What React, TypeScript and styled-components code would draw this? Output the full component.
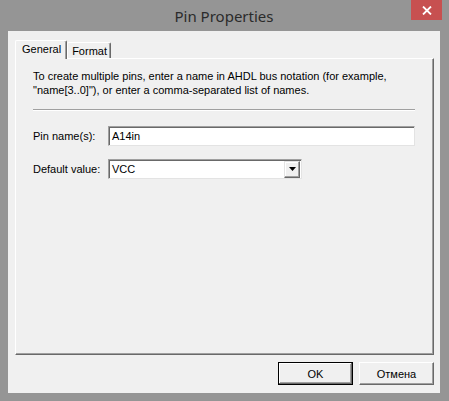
import React from "react";
import styled, { createGlobalStyle } from "styled-components";

const Global = createGlobalStyle`
  html, body { margin: 0; padding: 0; }
  body { width: 449px; height: 401px; overflow: hidden; background: #959595; font-family: "Liberation Sans", Arial, sans-serif; }
`;

const Window = styled.div`
  width: 449px;
  height: 401px;
  box-sizing: border-box;
  padding: 0 9px 8px 8px;
  display: flex;
  flex-direction: column;
  background: #959595;
`;

const TitleBar = styled.div`
  position: relative;
  height: 31px;
  flex: none;
  display: flex;
  align-items: center;
  justify-content: center;
`;

const Title = styled.div`
  font-family: "Noto Sans", "Open Sans", sans-serif;
  font-size: 15px;
  color: #2b2b2b;
  margin-top: 1px;
`;

const CloseButton = styled.div`
  position: absolute;
  top: 0;
  right: -2px;
  width: 31px;
  height: 20px;
  background: #c75050;
  display: flex;
  align-items: center;
  justify-content: center;
`;

const Client = styled.div`
  flex: 1;
  background: #f0f0f0;
  display: flex;
  flex-direction: column;
  padding: 9px 6px 8px 7px;
  box-sizing: border-box;
`;

const TabRow = styled.div`
  display: flex;
  align-items: flex-end;
  height: 18px;
  position: relative;
  z-index: 1;
`;

const Tab = styled.div<{ $active?: boolean }>`
  box-sizing: border-box;
  height: ${(p) => (p.$active ? 19 : 16)}px;
  margin-bottom: ${(p) => (p.$active ? -1 : 0)}px;
  padding: ${(p) => (p.$active ? "2px 5px 0 6px" : "2px 3px 0 4px")};
  font-size: 11px;
  color: #000;
  background: #f0f0f0;
  border-top: 1px solid #ffffff;
  border-left: 1px solid #ffffff;
  border-right: 1px solid #696969;
  border-top-left-radius: 2px;
  border-top-right-radius: 2px;
  box-shadow: inset -1px 0 0 #a0a0a0;
`;

const Panel = styled.div`
  flex: 1;
  box-sizing: border-box;
  background: #f0f0f0;
  border-top: 1px solid #ffffff;
  border-left: 1px solid #ffffff;
  border-right: 1px solid #696969;
  border-bottom: 1px solid #696969;
  box-shadow: inset -1px -1px 0 #a0a0a0;
  padding: 10px 18px 0 17px;
  display: flex;
  flex-direction: column;
`;

const Hint = styled.p`
  margin: 0;
  font-size: 11px;
  line-height: 14px;
  color: #000;
  width: 370px;
`;

const Separator = styled.div`
  margin-top: 12px;
  height: 0;
  border-top: 1px solid #a0a0a0;
  border-bottom: 1px solid #ffffff;
`;

const Form = styled.div`
  margin-top: 15px;
  display: grid;
  grid-template-columns: 75px auto;
  row-gap: 13px;
  align-items: center;
`;

const Label = styled.label`
  font-size: 11px;
  color: #000;
`;

const TextBox = styled.div`
  box-sizing: border-box;
  height: 20px;
  background: #fff;
  border-top: 1px solid #a0a0a0;
  border-left: 1px solid #a0a0a0;
  border-right: 1px solid #e3e3e3;
  border-bottom: 1px solid #e3e3e3;
  box-shadow: inset 1px 1px 0 #696969;
  font-size: 11px;
  padding: 3px 3px 0 3px;
  color: #000;
`;

const Combo = styled(TextBox)`
  width: 194px;
  display: flex;
  justify-content: space-between;
  padding: 0 1px 0 3px;
  align-items: center;
`;

const ComboButton = styled.div`
  box-sizing: border-box;
  width: 16px;
  height: 17px;
  background: #f0f0f0;
  border-top: 1px solid #e3e3e3;
  border-left: 1px solid #e3e3e3;
  border-right: 1px solid #696969;
  border-bottom: 1px solid #696969;
  box-shadow: inset -1px -1px 0 #a0a0a0, inset 1px 1px 0 #fff;
  display: flex;
  align-items: center;
  justify-content: center;
`;

const ButtonRow = styled.div`
  display: flex;
  justify-content: flex-end;
  gap: 6px;
  margin-top: 7px;
  height: 23px;
`;

const Button = styled.div<{ $default?: boolean }>`
  box-sizing: border-box;
  width: 75px;
  height: 23px;
  font-size: 11px;
  color: #000;
  background: #f0f0f0;
  display: flex;
  align-items: center;
  justify-content: center;
  border: 1px solid ${(p) => (p.$default ? "#000" : "transparent")};
  box-shadow: inset -1px -1px 0 #696969, inset 1px 1px 0 #fff, inset -2px -2px 0 #a0a0a0;
  ${(p) => (p.$default ? "" : "border-color: #fff #696969 #696969 #fff; box-shadow: inset -1px -1px 0 #a0a0a0;")}
`;

export default function App() {
  return (
    <>
      <Global />
      <Window>
        <TitleBar>
          <Title>Pin Properties</Title>
          <CloseButton>
            <svg width="10" height="9" viewBox="0 0 10 9">
              <path d="M1 0.5 L9 8.5 M9 0.5 L1 8.5" stroke="#fff" strokeWidth="1.8" />
            </svg>
          </CloseButton>
        </TitleBar>
        <Client>
          <TabRow>
            <Tab $active>General</Tab>
            <Tab>Format</Tab>
          </TabRow>
          <Panel>
            <Hint>
              To create multiple pins, enter a name in AHDL bus notation (for example, "name[3..0]"), or enter a comma-separated list of names.
            </Hint>
            <Separator />
            <Form>
              <Label>Pin name(s):</Label>
              <TextBox>A14in</TextBox>
              <Label>Default value:</Label>
              <Combo>
                <span>VCC</span>
                <ComboButton>
                  <svg width="7" height="4" viewBox="0 0 7 4">
                    <path d="M0 0 H7 L3.5 4 Z" fill="#000" />
                  </svg>
                </ComboButton>
              </Combo>
            </Form>
          </Panel>
          <ButtonRow>
            <Button $default>OK</Button>
            <Button>Отмена</Button>
          </ButtonRow>
        </Client>
      </Window>
    </>
  );
}
